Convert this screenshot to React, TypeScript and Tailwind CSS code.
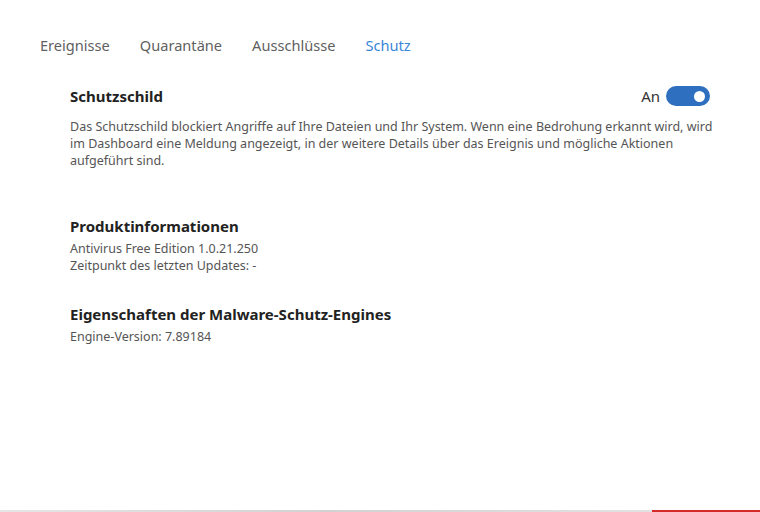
import React, { useState } from "react";

const tabs = ["Ereignisse", "Quarantäne", "Ausschlüsse", "Schutz"];

const App = () => {
  const [active, setActive] = useState("Schutz");
  const [shield, setShield] = useState(true);

  return (
    <div
      className="w-[760px] h-[512px] bg-white flex flex-col overflow-hidden"
      style={{ fontFamily: '"Noto Sans", "Open Sans", sans-serif' }}
    >
      <div className="flex-1">
        {/* Tabs */}
        <div className="flex gap-[30px] pl-[40px] pt-[34px] text-[14.6px] leading-[22px]">
          {tabs.map((t) => (
            <button
              key={t}
              onClick={() => setActive(t)}
              className={t === active ? "text-[#3a86d8]" : "text-[#5f5f5f]"}
            >
              {t}
            </button>
          ))}
        </div>

        <div className="pl-[70px] pr-[40px]">
          {/* Schutzschild */}
          <div className="mt-[29px] mr-[10px] flex items-center justify-between">
            <h2 className="text-[15px] font-bold text-[#222] leading-[22px]">Schutzschild</h2>
            <div className="flex items-center gap-[6px]">
              <span className="text-[15px] text-[#333]">An</span>
              <button
                onClick={() => setShield(!shield)}
                className={`w-[44px] h-[20px] rounded-full flex items-center px-[5px] ${
                  shield ? "bg-[#2f6fc0] justify-end" : "bg-[#bbb] justify-start"
                }`}
              >
                <span className="w-[11px] h-[11px] rounded-full bg-white" />
              </button>
            </div>
          </div>
          <p className="mt-[10px] text-[12.5px] leading-[17px] text-[#555] whitespace-nowrap">
            Das Schutzschild blockiert Angriffe auf Ihre Dateien und Ihr System. Wenn eine Bedrohung erkannt wird, wird
            <br />
            im Dashboard eine Meldung angezeigt, in der weitere Details über das Ereignis und mögliche Aktionen
            <br />
            aufgeführt sind.
          </p>

          {/* Produktinformationen */}
          <h2 className="mt-[46px] text-[15px] font-bold text-[#222] leading-[22px]">Produktinformationen</h2>
          <div className="mt-[3px] text-[12.5px] leading-[17px] text-[#555]">
            <div>Antivirus Free Edition 1.0.21.250</div>
            <div>Zeitpunkt des letzten Updates: -</div>
          </div>

          {/* Engines */}
          <h2 className="mt-[29px] text-[15px] font-bold text-[#222] leading-[22px]">
            Eigenschaften der Malware-Schutz-Engines
          </h2>
          <div className="mt-[3px] text-[12.5px] leading-[17px] text-[#555]">Engine-Version: 7.89184</div>
        </div>
      </div>

      {/* bottom edge */}
      <div className="flex h-[2px]">
        <div className="w-[652px] bg-gradient-to-r from-[#e6e6e6] via-[#d2d2d2] to-[#e2e2e2]" />
        <div className="flex-1 bg-[#d42a2a]" />
      </div>
    </div>
  );
};

export default App;
